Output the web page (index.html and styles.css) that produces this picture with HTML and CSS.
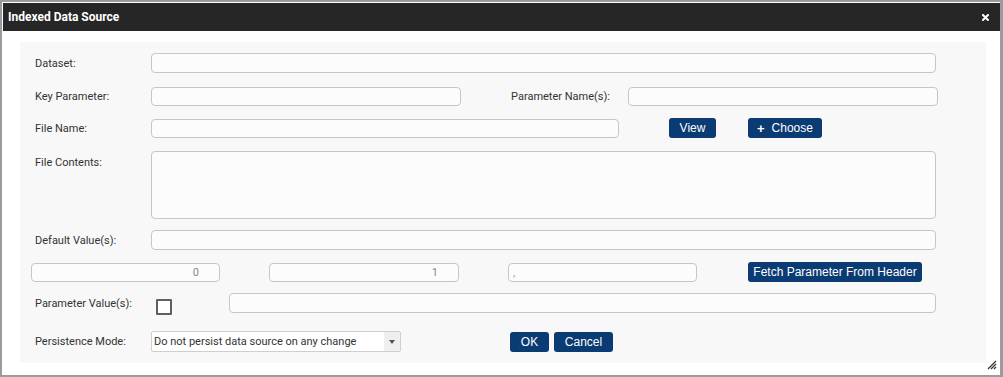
FILE: index.html
```html
<!DOCTYPE html>
<html lang="en">
<head>
    <meta charset="UTF-8">
    <title>Indexed Data Source</title>
    <link rel="stylesheet" href="styles.css">
</head>
<body>
    <div class="dialog">
        <div class="titlebar">
            <span class="title">Indexed Data Source</span>
            <svg class="close" width="7" height="7" viewBox="0 0 7 7">
                <path d="M1 1 L6 6 M6 1 L1 6" stroke="#fff" stroke-width="2" stroke-linecap="square"/>
            </svg>
        </div>
        <div class="dialog-body">
            <div class="panel">
                <div class="row">
                    <label class="lbl">Dataset:</label>
                    <input class="field grow" type="text">
                </div>
                <div class="row row-key">
                    <label class="lbl">Key Parameter:</label>
                    <input class="field w310" type="text">
                    <label class="lbl-right">Parameter Name(s):</label>
                    <input class="field w310" type="text">
                </div>
                <div class="row row-file">
                    <label class="lbl">File Name:</label>
                    <input class="field w468" type="text">
                    <button class="btn btn-view">View</button>
                    <button class="btn btn-choose"><span class="plus">+</span>Choose</button>
                </div>
                <div class="row row-area">
                    <label class="lbl lbl-top">File Contents:</label>
                    <textarea class="field area grow"></textarea>
                </div>
                <div class="row row-default">
                    <label class="lbl">Default Value(s):</label>
                    <input class="field grow" type="text">
                </div>
                <div class="row row-triple">
                    <input class="field w189 num" type="text" value="0">
                    <input class="field w190 num" type="text" value="1">
                    <input class="field w189 sep" type="text" value=",">
                    <button class="btn btn-fetch">Fetch Parameter From Header</button>
                </div>
                <div class="row row-param">
                    <label class="lbl">Parameter Value(s):</label>
                    <span class="check"></span>
                    <input class="field grow" type="text">
                </div>
                <div class="row row-persist">
                    <label class="lbl">Persistence Mode:</label>
                    <div class="select">
                        <span class="select-text">Do not persist data source on any change</span>
                        <span class="select-arrow"></span>
                    </div>
                    <button class="btn btn-ok">OK</button>
                    <button class="btn btn-cancel">Cancel</button>
                </div>
            </div>
            <svg class="grip" width="10" height="10" viewBox="0 0 10 10">
                <path d="M9 1 L1 9 M9 4 L4 9 M9 7 L7 9" stroke="#333" stroke-width="1.2"/>
            </svg>
        </div>
    </div>
</body>
</html>
```

FILE: styles.css
```css
body {
    margin: 0;
    background: #fff;
    font-family: Roboto, "Liberation Sans", sans-serif;
    font-size: 11px;
    color: #333;
}
.dialog {
    width: 1003px;
    height: 377px;
    box-sizing: border-box;
    border: 2px solid #9b9b9b;
    border-right-width: 3px;
    padding: 1px 0 0 1px;
    background: #fff;
    display: flex;
    flex-direction: column;
}
.titlebar {
    height: 28px;
    background: #262626;
    display: flex;
    align-items: center;
    justify-content: space-between;
    padding: 0 11px 0 5px;
    flex: none;
}
.title {
    color: #fff;
    font-weight: bold;
    font-size: 12px;
    font-family: Roboto, "Liberation Sans", sans-serif;
}
.close {
    display: block;
    margin-top: 1px;
}
.dialog-body {
    flex: 1;
    padding: 11px 14px 0 17px;
    position: relative;
}
.panel {
    background: #f8f8f8;
    height: 321px;
    box-sizing: border-box;
    padding: 11px 50px 0 11px;
}
.row {
    display: flex;
    align-items: center;
    height: 20px;
    margin-bottom: 13px;
}
.lbl {
    width: 120px;
    flex: none;
    box-sizing: border-box;
    padding-left: 4px;
}
.lbl-top {
    align-self: flex-start;
    padding-top: 5px;
}
.lbl-right {
    width: 167px;
    flex: none;
    box-sizing: border-box;
    text-align: right;
    padding-right: 18px;
}
.field {
    height: 20px;
    box-sizing: border-box;
    border: 1px solid #c6c6c6;
    border-radius: 4px;
    background: #fcfcfc;
    font-family: Roboto, "Liberation Sans", sans-serif;
    font-size: 11px;
    color: #888;
    padding: 0 4px;
    margin: 0;
    outline: none;
}
.grow { flex: 1; }
.w310 { width: 310px; flex: none; }
.w468 { width: 468px; flex: none; }
.w189 { width: 189px; flex: none; }
.w190 { width: 190px; flex: none; }
.num {
    text-align: right;
    padding-right: 20px;
}
.sep { color: #999; }
.row-key { margin-bottom: 12px; }
.row-key .field { height: 19px; }
.row-file .field { height: 19px; }
.row-area {
    height: 68px;
    align-items: stretch;
    margin-bottom: 11px;
}
.area {
    height: 68px;
    resize: none;
}
.row-default { margin-bottom: 12px; }
.row-triple { margin-bottom: 11px; }
.row-triple .field { height: 19px; margin-top: 1px; }
.row-triple .w190 { margin-left: 49px; }
.row-triple .sep { margin-left: 49px; }
.row-param { margin-bottom: 18px; }
.row-persist { height: 21px; }
.check {
    width: 16px;
    height: 16px;
    box-sizing: border-box;
    border: 2px solid #5f5f5f;
    border-radius: 1px;
    background: #fff;
    margin: 8px 0 0 5px;
    flex: none;
}
.row-param .field { margin-left: 57px; }
.btn {
    height: 20px;
    border: none;
    border-radius: 3px;
    background: #0a3b73;
    color: #fff;
    font-family: "Liberation Sans", Arial, sans-serif;
    font-size: 12px;
    padding: 0;
    flex: none;
    display: flex;
    align-items: center;
    justify-content: center;
}
.btn-view {
    width: 47px;
    margin-left: 50px;
}
.btn-choose {
    width: 74px;
    margin-left: 32px;
}
.plus {
    font-weight: bold;
    font-size: 13px;
    margin-right: 7px;
}
.btn-fetch {
    width: 174px;
    margin-left: 51px;
}
.select {
    width: 250px;
    height: 21px;
    flex: none;
    box-sizing: border-box;
    border: 1px solid #cfcfcf;
    border-radius: 2px;
    background: #fff;
    display: flex;
    align-items: stretch;
}
.select-text {
    flex: 1;
    display: flex;
    align-items: center;
    padding-left: 2px;
    color: #333;
}
.select-arrow {
    width: 16px;
    background: #efefef;
    position: relative;
}
.select-arrow::after {
    content: "";
    position: absolute;
    left: 5px;
    top: 8px;
    border-left: 3.5px solid transparent;
    border-right: 3.5px solid transparent;
    border-top: 4px solid #555;
}
.btn-ok {
    width: 39px;
    margin-left: 109px;
}
.btn-cancel {
    width: 59px;
    margin-left: 5px;
}
.grip {
    position: absolute;
    right: 3px;
    bottom: 5px;
}
```
